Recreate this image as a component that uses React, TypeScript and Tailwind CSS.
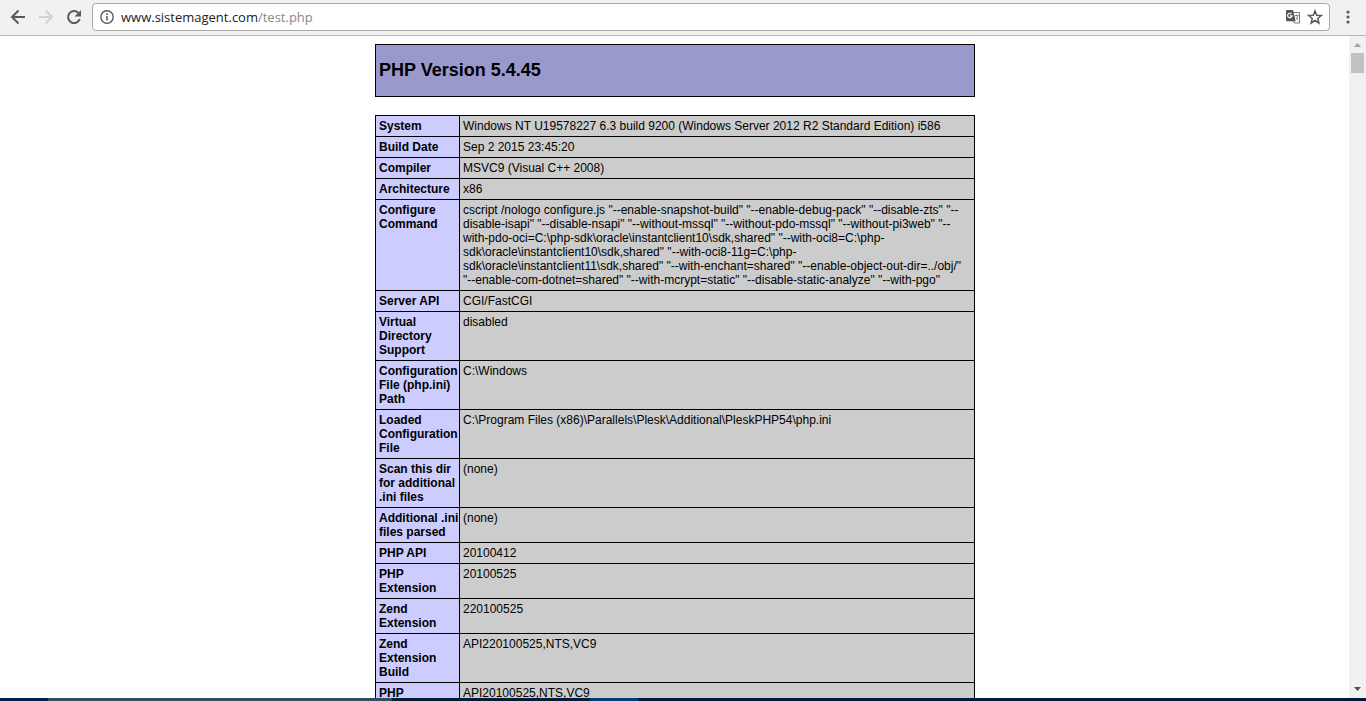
import { ReactNode } from "react";

const configureLines = [
  'cscript /nologo configure.js "--enable-snapshot-build" "--enable-debug-pack" "--disable-zts" "--',
  'disable-isapi" "--disable-nsapi" "--without-mssql" "--without-pdo-mssql" "--without-pi3web" "--',
  'with-pdo-oci=C:\\php-sdk\\oracle\\instantclient10\\sdk,shared" "--with-oci8=C:\\php-',
  'sdk\\oracle\\instantclient10\\sdk,shared" "--with-oci8-11g=C:\\php-',
  'sdk\\oracle\\instantclient11\\sdk,shared" "--with-enchant=shared" "--enable-object-out-dir=../obj/"',
  '"--enable-com-dotnet=shared" "--with-mcrypt=static" "--disable-static-analyze" "--with-pgo"',
];

const rows: [string[], string[]][] = [
  [["System"], ["Windows NT U19578227 6.3 build 9200 (Windows Server 2012 R2 Standard Edition) i586"]],
  [["Build Date"], ["Sep 2 2015 23:45:20"]],
  [["Compiler"], ["MSVC9 (Visual C++ 2008)"]],
  [["Architecture"], ["x86"]],
  [["Configure", "Command"], configureLines],
  [["Server API"], ["CGI/FastCGI"]],
  [["Virtual", "Directory", "Support"], ["disabled"]],
  [["Configuration", "File (php.ini)", "Path"], ["C:\\Windows"]],
  [["Loaded", "Configuration", "File"], ["C:\\Program Files (x86)\\Parallels\\Plesk\\Additional\\PleskPHP54\\php.ini"]],
  [["Scan this dir", "for additional", ".ini files"], ["(none)"]],
  [["Additional .ini", "files parsed"], ["(none)"]],
  [["PHP API"], ["20100412"]],
  [["PHP", "Extension"], ["20100525"]],
  [["Zend", "Extension"], ["220100525"]],
  [["Zend", "Extension", "Build"], ["API220100525,NTS,VC9"]],
  [["PHP"], ["API20100525,NTS,VC9"]],
];

function Lines({ items }: { items: string[] }) {
  return (
    <>
      {items.map((t, i) => (
        <span key={i} className="block whitespace-nowrap">
          {t}
        </span>
      ))}
    </>
  );
}

function IconButton({ label, className = "", children }: { label: string; className?: string; children: ReactNode }) {
  return (
    <button type="button" aria-label={label} className={`flex shrink-0 items-center justify-center ${className}`}>
      {children}
    </button>
  );
}

function Toolbar() {
  return (
    <header className="flex h-9 shrink-0 items-center border-b border-[#b6b4b6] bg-[#f1f1f1] pb-px pl-2 pr-1.5 text-[#5a5a5a]">
      <IconButton label="Back" className="size-5">
        <svg width="20" height="20" viewBox="0 0 20 20" fill="none" stroke="currentColor" strokeWidth="2">
          <path d="M17 10H4.5M10.5 3.5 4 10l6.500 6.500" />
        </svg>
      </IconButton>
      <IconButton label="Forward" className="ml-2 size-5 text-[#d2d2d2]">
        <svg width="20" height="20" viewBox="0 0 20 20" fill="none" stroke="currentColor" strokeWidth="2">
          <path d="M3 10h12.500M9.500 3.500 16 10l-6.500 6.500" />
        </svg>
      </IconButton>
      <IconButton label="Reload" className="ml-2 size-5">
        <svg width="20" height="20" viewBox="0 0 20 20">
          <path d="M15.700 12.200a6 6 0 1 1-1.300-6.300" fill="none" stroke="currentColor" strokeWidth="2" />
          <path d="M17 3v6.500h-6.500z" fill="currentColor" />
        </svg>
      </IconButton>
      <div className="ml-2 flex h-7 flex-1 items-center rounded-sm border border-[#a9a9a9] bg-white pl-[7px] pr-1.5">
        <svg width="14" height="14" viewBox="0 0 14 14" className="shrink-0">
          <circle cx="7" cy="7" r="6.200" fill="none" stroke="currentColor" strokeWidth="1.400" />
          <path d="M6.200 6h1.600v4.500H6.200zM6.200 3.300h1.600v1.600H6.200z" fill="currentColor" />
        </svg>
        <a href="#" className="ml-[7px] flex-1 font-['Open_Sans',sans-serif] text-[13px] leading-5 text-[#222]">
          www.sistemagent.com<span className="text-[#888]">/test.php</span>
        </a>
        <IconButton label="Translate this page" className="size-4">
          <svg width="16" height="16" viewBox="0 0 16 16">
            <path d="M8 3.500h6.500v10.500H9.500l-1.500-2.500" fill="#fff" stroke="#777" />
            <path d="M2 1h6l2.700 11.300H2a1 1 0 0 1-1-1V2a1 1 0 0 1 1-1z" fill="#555" />
            <path d="M6.500 5A2.200 2.200 0 1 0 7 6.900H5" fill="none" stroke="#fff" strokeWidth="1.200" />
            <path d="M10 6.500h3.500M11.700 5.500v1M12.800 6.500c-.2 1.800-.9 2.800-1.800 3.600M11 8.200c.4 1.300 1.200 2 2.200 2.600" fill="none" stroke="#777" strokeWidth=".9" />
          </svg>
        </IconButton>
        <IconButton label="Bookmark this page" className="ml-1.5 size-4">
          <svg width="16" height="16" viewBox="0 0 16 16">
            <path d="m8 1.900 1.700 4.300 4.600.3-3.500 3 1.100 4.500L8 11.500 4.100 14l1.100-4.500-3.500-3 4.600-.3z" fill="none" stroke="currentColor" strokeWidth="1.500" />
          </svg>
        </IconButton>
      </div>
      <IconButton label="Menu" className="ml-1.5 h-7 w-6">
        <svg width="4" height="14" viewBox="0 0 4 14" fill="currentColor">
          <circle cx="2" cy="2" r="1.600" />
          <circle cx="2" cy="7" r="1.600" />
          <circle cx="2" cy="12" r="1.600" />
        </svg>
      </IconButton>
    </header>
  );
}

function Scrollbar() {
  return (
    <div className="flex w-[17px] shrink-0 flex-col items-center bg-[#f1f1f1]">
      <IconButton label="Scroll up" className="h-[17px] w-full">
        <svg width="7" height="4" viewBox="0 0 7 4" fill="#a3a3a3">
          <path d="M3.500 0 7 4H0z" />
        </svg>
      </IconButton>
      <div className="h-5 w-[13px] bg-[#c1c1c1]" />
      <IconButton label="Scroll down" className="mt-auto h-[18px] w-full">
        <svg width="7" height="4" viewBox="0 0 7 4" fill="#505050">
          <path d="M0 0h7L3.500 4z" />
        </svg>
      </IconButton>
    </div>
  );
}

export default function App() {
  return (
    <div className="flex h-screen flex-col overflow-hidden bg-white font-['Liberation_Sans',Arial,sans-serif] text-black">
      <Toolbar />
      <div className="flex min-h-0 flex-1">
        <main className="min-w-0 flex-1 overflow-hidden pt-2 pl-px">
          <div className="mx-auto w-[600px]">
            <div className="mb-[18px] border border-black bg-[#9999cc] px-[3px] py-[15px]">
              <h1 className="text-lg leading-[21px] font-bold">PHP Version 5.4.45</h1>
            </div>
            <table className="w-full table-fixed border-collapse text-left align-top text-xs leading-[14px]">
              <colgroup>
                <col className="w-[84px]" />
                <col />
              </colgroup>
              <tbody>
                {rows.map(([name, value], i) => (
                  <tr key={i} className="align-top">
                    <th scope="row" className="border border-black bg-[#ccccff] p-[3px] font-bold">
                      <Lines items={name} />
                    </th>
                    <td className="border border-black bg-[#cccccc] p-[3px]">
                      <Lines items={value} />
                    </td>
                  </tr>
                ))}
              </tbody>
            </table>
          </div>
        </main>
        <Scrollbar />
      </div>
      <footer className="flex h-[3px] shrink-0 bg-[#001a38]">
        <div className="w-12 bg-[#00204a]" />
        <div className="w-[344px] bg-[#344a60]" />
        <div className="ml-[198px] w-12 bg-[#003c78]" />
      </footer>
    </div>
  );
}
